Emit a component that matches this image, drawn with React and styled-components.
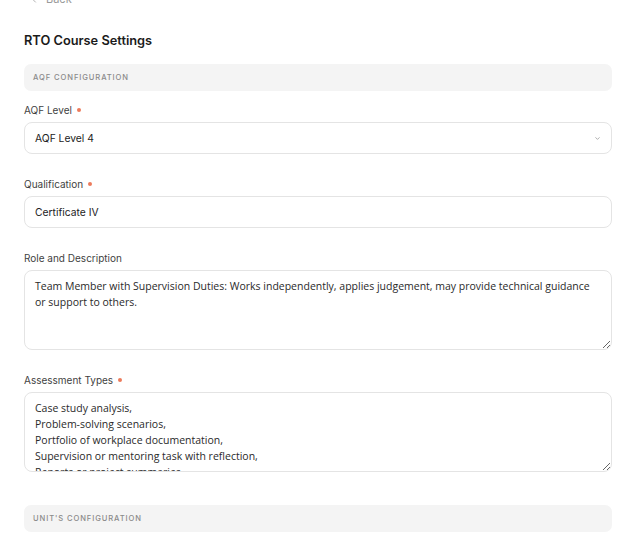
import React from 'react'
import styled, { createGlobalStyle } from 'styled-components'

const GlobalStyle = createGlobalStyle`
  body {
    margin: 0;
    background: #fff;
    font-family: 'Inter', 'Liberation Sans', sans-serif;
    overflow: hidden;
  }
`

const Page = styled.div`
  margin-top: -9px;
  padding: 0 19px 40px 24px;
`

const BackLink = styled.div`
  display: flex;
  align-items: center;
  gap: 6px;
  padding-left: 7px;
  height: 16px;
  font-size: 11px;
  color: #9a9a9a;

  svg {
    width: 9px;
    height: 9px;
  }
`

const Title = styled.h1`
  margin: 24px 0 13px;
  font-size: 12.8px;
  line-height: 20px;
  font-weight: 600;
  color: #1b1b1b;
`

const SectionHeader = styled.div`
  display: flex;
  align-items: center;
  height: 27px;
  padding: 0 9px;
  border-radius: 7px;
  background: #f4f4f4;
  font-size: 7.6px;
  font-weight: 500;
  letter-spacing: 0.9px;
  text-transform: uppercase;
  color: #8a8a8a;
  margin-top: ${p => p.$spaced ? '33px' : '0'};
`

const Field = styled.div`
  margin-top: ${p => p.$first ? '11px' : '22px'};
`

const Label = styled.div`
  display: flex;
  align-items: center;
  height: 16px;
  margin-bottom: 4px;
  font-size: 10px;
  color: #3f3f3f;
`

const Required = styled.span`
  width: 4px;
  height: 4px;
  margin-left: 5px;
  border-radius: 50%;
  background: #ec7b5c;
`

const Box = styled.div`
  display: flex;
  align-items: center;
  justify-content: space-between;
  box-sizing: border-box;
  height: 32px;
  padding: 0 10px;
  border: 1px solid #e4e4e4;
  border-radius: 8px;
  background: #fff;
  font-size: 10.3px;
  color: #232323;

  svg {
    width: 7px;
    height: 7px;
    color: #8c8c8c;
  }
`

const TextArea = styled.textarea`
  display: block;
  box-sizing: border-box;
  width: 100%;
  height: 80px;
  margin: 0;
  padding: 7px 10px;
  border: 1px solid #e4e4e4;
  border-radius: 8px;
  font-family: 'Open Sans', 'Liberation Sans', sans-serif;
  font-size: 10.5px;
  line-height: 16px;
  color: #2a2a2a;
  resize: vertical;
  overflow: hidden;
  outline: none;
`

const roleText =
  'Team Member with Supervision Duties: Works independently, applies judgement, may provide technical guidance or support to others.'

const assessmentText = [
  'Case study analysis,',
  'Problem-solving scenarios,',
  'Portfolio of workplace documentation,',
  'Supervision or mentoring task with reflection,',
  'Reports or project summaries,',
  'Workplace observation'
].join('\n')

export default function App() {
  return (
    <>
      <GlobalStyle />
      <Page>
        <BackLink>
          <svg viewBox="0 0 24 24" fill="none" stroke="currentColor" strokeWidth="2" strokeLinecap="round" strokeLinejoin="round">
            <path d="M19 12H5M12 19l-7-7 7-7" />
          </svg>
          Back
        </BackLink>

        <Title>RTO Course Settings</Title>

        <SectionHeader>AQF Configuration</SectionHeader>

        <Field $first>
          <Label>AQF Level<Required /></Label>
          <Box>
            AQF Level 4
            <svg viewBox="0 0 24 24" fill="none" stroke="currentColor" strokeWidth="2.4" strokeLinecap="round" strokeLinejoin="round">
              <path d="M6 9l6 6 6-6" />
            </svg>
          </Box>
        </Field>

        <Field>
          <Label>Qualification<Required /></Label>
          <Box>Certificate IV</Box>
        </Field>

        <Field>
          <Label>Role and Description</Label>
          <TextArea defaultValue={roleText} />
        </Field>

        <Field>
          <Label>Assessment Types<Required /></Label>
          <TextArea defaultValue={assessmentText} />
        </Field>

        <SectionHeader $spaced>Unit's Configuration</SectionHeader>
      </Page>
    </>
  )
}
